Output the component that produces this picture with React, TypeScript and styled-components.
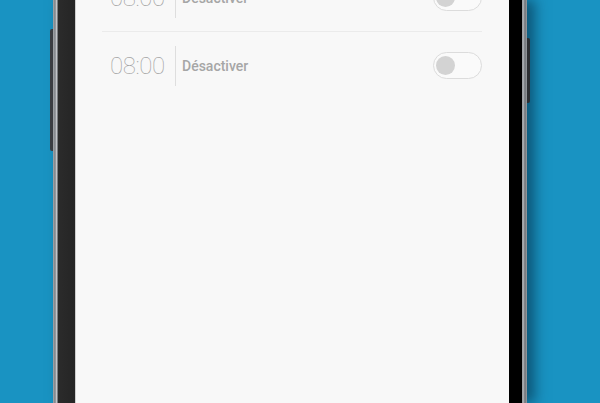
import React from "react";
import styled, { createGlobalStyle } from "styled-components";

const GlobalStyle = createGlobalStyle`
  html, body {
    margin: 0;
    padding: 0;
    background: #1993c2;
    font-family: Roboto, "Noto Sans", sans-serif;
  }
`;

interface Alarm {
  time: string;
  label: string;
  on: boolean;
}

const alarms: Alarm[] = [
  { time: "08:00", label: "Désactiver", on: false },
  { time: "08:00", label: "Désactiver", on: false },
];

const App = () => {
  return (
    <>
      <GlobalStyle />
      <Page>
        <Phone>
          <LeftButton />
          <RightButton />
          <Bezel>
            <Screen>
              <AlarmList>
                {alarms.map((a, i) => (
                  <AlarmRow key={i} last={i === alarms.length - 1}>
                    <Time>{a.time}</Time>
                    <Separator />
                    <Label>{a.label}</Label>
                    <Toggle on={a.on}>
                      <Knob on={a.on} />
                    </Toggle>
                  </AlarmRow>
                ))}
              </AlarmList>
            </Screen>
          </Bezel>
        </Phone>
      </Page>
    </>
  );
};

export default App;

const Page = styled.div`
  width: 600px;
  height: 403px;
  overflow: hidden;
  display: flex;
  justify-content: flex-start;
  padding-left: 53px;
  box-sizing: border-box;
`;

const Phone = styled.div`
  position: relative;
  width: 474px;
  height: 403px;
  box-sizing: border-box;
  padding: 0 5px;
  background: linear-gradient(
    90deg,
    #a4a8ac 0px,
    #7d8186 2px,
    #c2c5c9 3.5px,
    #55585d 5px,
    #2a2a2a 6px,
    #1a1a1a 460px,
    #4a4d52 468px,
    #b7bbbf 470px,
    #6d7176 472px,
    #9a9ea3 474px
  );
  box-shadow: 8px 0 12px rgba(0, 30, 50, 0.5);
  display: flex;
`;

const LeftButton = styled.div`
  position: absolute;
  left: -3px;
  top: 29px;
  width: 3px;
  height: 122px;
  background: #3a3d42;
  border-radius: 2px 0 0 2px;
`;

const RightButton = styled.div`
  position: absolute;
  right: -3px;
  top: 38px;
  width: 3px;
  height: 65px;
  background: #2c2f33;
  border-radius: 0 2px 2px 0;
`;

const Bezel = styled.div`
  flex: 1;
  display: flex;
  padding: 0 13px 0 18px;
  background: linear-gradient(90deg, #2b2b2b 0px, #262626 14px, #000 400px, #000 100%);
`;

const Screen = styled.div`
  flex: 1;
  background: #f8f8f8;
  box-shadow: -1px 0 0 #cfcfcf;
  overflow: hidden;
  padding: 0 27px 0 26px;
`;

const AlarmList = styled.div`
  margin-top: -36px;
  display: flex;
  flex-direction: column;
`;

const AlarmRow = styled.div<{ last?: boolean }>`
  height: 67px;
  display: flex;
  align-items: center;
  padding-left: 8px;
  border-bottom: 1px solid ${(p) => (p.last ? "transparent" : "#ebebeb")};
`;

const Time = styled.div`
  font-family: Roboto, sans-serif;
  font-weight: 100;
  font-size: 24px;
  letter-spacing: -0.4px;
  color: #a2a2a2;
  width: 65px;
`;

const Separator = styled.div`
  width: 1px;
  height: 40px;
  background: #dedede;
  margin-right: 6px;
`;

const Label = styled.div`
  flex: 1;
  font-family: Roboto, sans-serif;
  font-weight: 500;
  font-size: 14px;
  color: #a6a6a6;
`;

const Toggle = styled.div<{ on: boolean }>`
  width: 49px;
  height: 27px;
  box-sizing: border-box;
  border-radius: 14px;
  border: 1.5px solid #dcdcdc;
  background: ${(p) => (p.on ? "#1993c2" : "#fafafa")};
  display: flex;
  align-items: center;
  justify-content: ${(p) => (p.on ? "flex-end" : "flex-start")};
  padding: 0 2px;
`;

const Knob = styled.div<{ on: boolean }>`
  width: 19px;
  height: 19px;
  border-radius: 50%;
  background: ${(p) => (p.on ? "#fff" : "#d3d3d3")};
`;
